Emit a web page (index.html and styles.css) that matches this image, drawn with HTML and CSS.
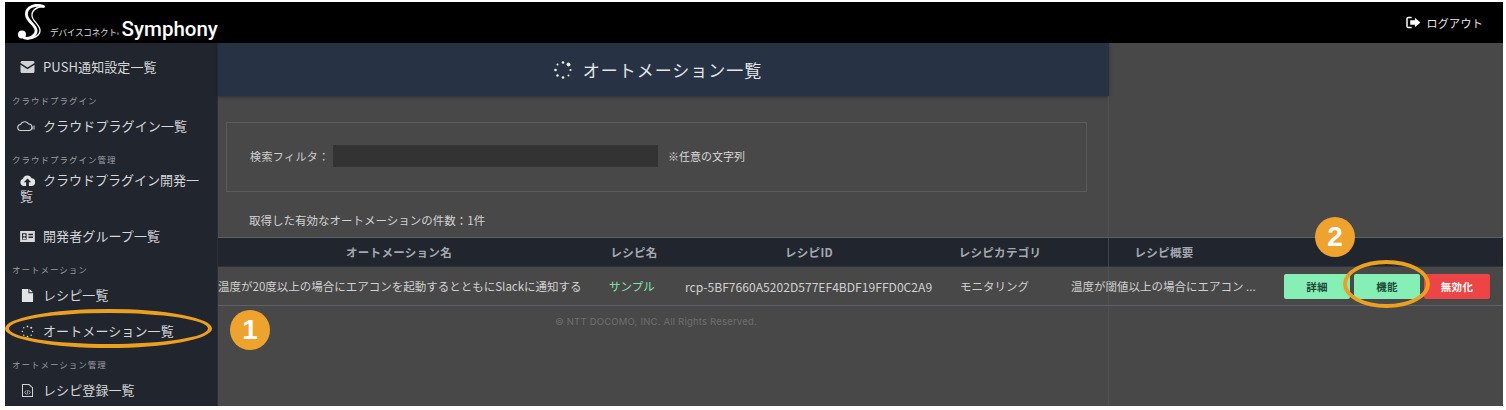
FILE: index.html
```html
<!DOCTYPE html>
<html lang="ja">
<head>
<meta charset="utf-8">
<title>オートメーション一覧</title>
<link rel="stylesheet" href="styles.css">
</head>
<body>
<div class="app">
  <header class="topbar">
    <div class="brand">
      <svg class="brand-s" viewBox="0 0 28 36" width="28" height="36" aria-hidden="true">
        <path d="M26.500 2.500C19 -.5 8.500 2.500 9.500 11c.8 6.500 8.500 9 9.500 15 .8 5-6 9.500-11.500 8" fill="none" stroke="#fff" stroke-width="2.800" stroke-linecap="round"/>
        <path d="M26.500 2.500C19 3 14.500 6.500 15 12c.5 5 7.500 8.500 8 14 .5 5-6 9-13 9" fill="none" stroke="#fff" stroke-width="1.300"/>
        <circle cx="5" cy="30.500" r="4" fill="#fff"/>
      </svg>
      <span class="brand-sub">デバイスコネクト<small>®</small></span>
      <span class="brand-name">Symphony</span>
    </div>
    <div class="logout">
      <svg viewBox="0 0 16 14" width="15" height="13" aria-hidden="true">
        <path d="M6 1.500H2.500A1.500 1.500 0 0 0 1 3v8a1.500 1.500 0 0 0 1.500 1.500H6" fill="none" stroke="#fff" stroke-width="1.600"/>
        <path d="M9.500 1.800 15.500 7l-6 5.200V9.500H4.500v-5h5z" fill="#fff"/>
      </svg>
      <span>ログアウト</span>
    </div>
  </header>
  <div class="body-row">
    <nav class="sidebar">
      <a class="nav-item">
        <svg class="nav-icon" viewBox="0 0 14 12" height="12"><path d="M0 1.500A1.500 1.500 0 0 1 1.500 0h11A1.500 1.500 0 0 1 14 1.500v.5L7 6.500 0 2zM0 3.800l7 4.400 7-4.400v6.700a1.500 1.500 0 0 1-1.500 1.500h-11A1.500 1.500 0 0 1 0 10.500z" fill="#d0d2d6"/></svg>
        <span class="nav-text">PUSH通知設定一覧</span>
      </a>
      <div class="nav-section">クラウドプラグイン</div>
      <a class="nav-item">
        <svg class="nav-icon nav-icon-wide" viewBox="0 0 18 12" height="12"><path d="M4 10.500a3 3 0 0 1-.5-6A4.500 4.500 0 0 1 11.500 4a3.300 3.300 0 0 1 1 6.500z" fill="none" stroke="#d0d2d6" stroke-width="1.100"/><path d="M15 6.500v3M17 5.500v4" stroke="#d0d2d6" stroke-width="1"/></svg>
        <span class="nav-text">クラウドプラグイン一覧</span>
      </a>
      <div class="nav-section">クラウドプラグイン管理</div>
      <a class="nav-item nav-wrap">
        <svg class="nav-icon" viewBox="0 0 16 12" height="11"><path d="M4 12a4 4 0 0 1-1-7.800A5 5 0 0 1 12.500 3.600 4.200 4.200 0 0 1 12 12h-2.500V8H12L8 3.800 4 8h2.500v4z" fill="#e2e3e6"/></svg>クラウドプラグイン開発一覧
      </a>
      <a class="nav-item">
        <svg class="nav-icon" viewBox="0 0 16 12" height="11"><path fill-rule="evenodd" d="M0 0h16v12H0zM2 2.500v7h5v-7zM9 3v1.500h5V3zM9 6v1.500h5V6z" fill="#d8d9dc"/><circle cx="4.500" cy="4.700" r="1.400" fill="#d8d9dc"/><path d="M2.500 9c0-3 4-3 4 0z" fill="#d8d9dc"/></svg>
        <span class="nav-text">開発者グループ一覧</span>
      </a>
      <div class="nav-section">オートメーション</div>
      <a class="nav-item">
        <svg class="nav-icon" viewBox="0 0 12 14" height="13"><path d="M0 0h7v4.500h5V14H0zM8 0l4 3.500H8z" fill="#e2e3e6"/></svg>
        <span class="nav-text">レシピ一覧</span>
      </a>
      <a class="nav-item">
        <svg class="nav-icon" viewBox="0 0 14 14" height="13"><g fill="#d8d9dc"><circle cx="7" cy="1.500" r=".9"/><circle cx="11" cy="3" r="1.100"/><circle cx="12.500" cy="7" r=".8"/><circle cx="11" cy="11" r=".8"/><circle cx="7" cy="12.500" r=".9"/><circle cx="3" cy="11" r=".8"/><circle cx="1.500" cy="7" r=".9"/><circle cx="3" cy="3" r=".8"/></g></svg>
        <span class="nav-text">オートメーション一覧</span>
      </a>
      <div class="nav-section">オートメーション管理</div>
      <a class="nav-item">
        <svg class="nav-icon" viewBox="0 0 12 14" height="13"><path d="M.6.600h7l3.800 3.400v9.400H.6z" fill="none" stroke="#d0d2d6" stroke-width="1.100"/><path d="M4.500 7 3 9l1.500 2M7.500 7 9 9l-1.500 2M6.500 6.500l-1 5" fill="none" stroke="#d0d2d6" stroke-width=".8"/></svg>
        <span class="nav-text">レシピ登録一覧</span>
      </a>
    </nav>
    <main class="content">
      <div class="title-band">
        <h1 class="title">
          <svg viewBox="0 0 20 20" width="20" height="20" aria-hidden="true"><g fill="#f0f0f0"><circle cx="10" cy="2.500" r="1.300"/><circle cx="15.500" cy="4.500" r="2"/><circle cx="17.500" cy="10" r="1.100"/><circle cx="15.500" cy="15.500" r="1"/><circle cx="10" cy="17.500" r="1.300"/><circle cx="4.500" cy="15.500" r="1.200"/><circle cx="2.500" cy="10" r="1.300"/><circle cx="4.500" cy="4.500" r="1"/></g></svg>
          <span>オートメーション一覧</span>
        </h1>
      </div>
      <section class="filter">
        <label class="filter-label">検索フィルタ：</label>
        <div class="filter-input"></div>
        <span class="filter-note">※任意の文字列</span>
      </section>
      <p class="count">取得した有効なオートメーションの件数：1件</p>
      <div class="table-head">
        <div>オートメーション名</div>
        <div>レシピ名</div>
        <div>レシピID</div>
        <div>レシピカテゴリ</div>
        <div>レシピ概要</div>
      </div>
      <div class="table-row">
        <div class="cell-name">温度が20度以上の場合にエアコンを起動するとともにSlackに通知する</div>
        <div class="cell-recipe">サンプル</div>
        <div class="cell-id">rcp-5BF7660A5202D577EF4BDF19FFD0C2A9</div>
        <div>モニタリング</div>
        <div>温度が閾値以上の場合にエアコン ...</div>
        <div class="actions">
          <button class="btn btn-green">詳細</button>
          <button class="btn btn-green">機能</button>
          <button class="btn btn-red">無効化</button>
        </div>
      </div>
      <footer class="copyright">© NTT DOCOMO, INC. All Rights Reserved.</footer>
    </main>
  </div>
  <span class="ring ring-nav"></span>
  <span class="ring ring-btn"></span>
  <span class="badge badge-one">1</span>
  <span class="badge badge-two">2</span>
</div>
</body>
</html>
```
FILE: styles.css
```css
* { box-sizing: border-box; }
html, body { margin: 0; height: 100%; background: #fff; overflow: hidden; }
body {
  font-family: "Noto Sans CJK JP", "Inter", "Liberation Sans", sans-serif;
  padding: 2px 3px 4px 5px;
}
.app { position: relative; height: 404px; display: flex; flex-direction: column; background: #484848; overflow: hidden; }

.topbar { flex: 0 0 41px; height: 41px; background: #000; display: flex; justify-content: space-between; align-items: center; color: #fff; }
.brand { display: flex; align-items: flex-end; height: 41px; padding: 0 0 3px 12px; }
.brand-sub { font-size: 8.600px; line-height: 10px; margin: 0 0 1px 5px; color: #ddd; letter-spacing: -.2px; white-space: nowrap; }
.brand-sub small { font-size: 4px; }
.brand-name { font-family: "Roboto", sans-serif; font-weight: 500; font-size: 20.500px; line-height: 20px; margin: 0 0 1px 3px; }
.logout { display: flex; align-items: center; gap: 6px; font-size: 11px; letter-spacing: .3px; padding-right: 20px; color: #e8e8e8; }

.body-row { flex: 1; display: flex; min-height: 0; }
.sidebar { flex: 0 0 213px; background: #21252d; color: #d6d7da; display: flex; flex-direction: column; border-right: 1px solid #2b2f36; overflow: hidden; padding-top: 7px; }
.nav-item { display: flex; align-items: center; gap: 8px; padding: 0 15px; font-size: 13px; line-height: 16px; height: 34px; flex: none; }
.nav-item + .nav-item { margin-top: 2px; }
.nav-item + .nav-section { margin-top: 7px; }
.nav-icon { flex: none; width: 15px; }
.nav-icon-wide { width: 18px; margin-left: -3px; }
.nav-text { white-space: nowrap; letter-spacing: .1px; }
.nav-wrap { display: block; height: 49px; padding-top: 4px; line-height: 15.500px; }
.nav-wrap .nav-icon { margin-right: 8px; vertical-align: -1px; }
.nav-section { font-size: 8.500px; line-height: 18px; height: 18px; flex: none; padding-left: 7px; color: #9a9da3; letter-spacing: 1px; white-space: nowrap; }

.content { flex: 1; min-width: 0; display: flex; flex-direction: column; position: relative; color: #d2d2d2; font-size: 11px; }
.content::after { content: ""; position: absolute; top: 53px; bottom: 0; left: 890px; width: 1px; background: #55585c; opacity: .6; }
.title-band { width: 891px; height: 53px; flex: none; background: #273344; display: flex; align-items: center; justify-content: center; box-shadow: 0 1px 3px rgba(0,0,0,.35); }
.title { margin: 0 0 0 -12px; display: flex; align-items: center; gap: 10px; font-size: 17px; font-weight: 400; color: #e4e6ea; letter-spacing: 1px; }

.filter { margin: 26px 0 0 8px; width: 861px; height: 70px; flex: none; border: 1px solid #5b5b5b; display: flex; align-items: center; padding: 0 0 2px 23px; font-size: 11px; }
.filter-label { width: 83px; color: #cfcfcf; white-space: nowrap; letter-spacing: .4px; }
.filter-input { width: 325px; height: 22px; background: #333; }
.filter-note { margin-left: 10px; color: #d8d8d8; white-space: nowrap; }

.count { margin: 20px 0 0 31px; height: 16px; line-height: 16px; font-size: 11.500px; color: #d2d2d2; white-space: nowrap; }

.table-head { margin-top: 9px; height: 30px; flex: none; background: #21252d; border-top: 1px solid #5d6167; border-bottom: 1px solid #30343a; display: grid; grid-template-columns: 362px 108px 242px 140px 188px 1fr; align-items: center; text-align: center; color: #a3a8b0; font-weight: 700; font-size: 11.500px; letter-spacing: .3px; }
.table-row { height: 39px; flex: none; border-bottom: 1px solid #5d6167; display: grid; grid-template-columns: 391px 76px 275px 111px 213px 1fr; align-items: center; font-size: 11.500px; color: #d0d0d0; white-space: nowrap; }
.cell-recipe { color: #86e3ae; }
.cell-id { font-size: 12.100px; }
.actions { display: flex; gap: 4px; }
.btn { width: 66px; height: 25px; padding: 0; border: 0; border-radius: 2px; font-family: inherit; font-size: 10.500px; font-weight: 700; letter-spacing: .3px; }
.btn-green { background: #86efb6; color: #1f4a3a; }
.btn-red { background: #ed4545; color: #fff; }
.copyright { margin: 10px 0 0 337px; font-size: 9.500px; line-height: 12px; color: #6f6f6f; letter-spacing: .2px; font-family: "Inter", "Liberation Sans", sans-serif; }

.ring { position: absolute; border: 4.500px solid #eba020; border-radius: 50%; pointer-events: none; }
.ring-nav { left: 0; top: 307px; width: 207px; height: 39px; }
.ring-btn { left: 1338px; top: 258px; width: 87px; height: 48px; }
.badge { position: absolute; width: 40px; height: 40px; border-radius: 50%; background: #eea32e; color: #fff; font: 700 28px/40px "Liberation Sans", sans-serif; text-align: center; }
.badge-one { left: 225px; top: 308px; }
.badge-two { left: 1310px; top: 215px; }
```
